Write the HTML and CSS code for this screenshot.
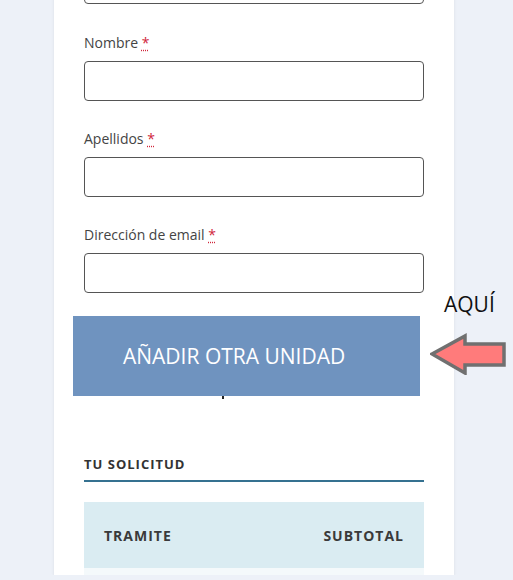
FILE: index.html
```html
<!DOCTYPE html>
<html lang="es">
<head>
    <meta charset="UTF-8">
    <meta name="viewport" content="width=device-width, initial-scale=1.0">
    <title>Solicitud</title>
    <link rel="stylesheet" href="styles.css">
</head>
<body>
    <div class="card">
        <div class="field field-top">
            <input type="text" class="input">
        </div>

        <div class="field">
            <label>Nombre <abbr class="required" title="obligatorio">*</abbr></label>
            <input type="text" class="input">
        </div>

        <div class="field">
            <label>Apellidos <abbr class="required" title="obligatorio">*</abbr></label>
            <input type="text" class="input">
        </div>

        <div class="field">
            <label>Dirección de email <abbr class="required" title="obligatorio">*</abbr></label>
            <input type="email" class="input">
        </div>

        <div class="add-unit">
            <span class="add-unit-dot"></span>
        </div>

        <h3 class="order-title">TU SOLICITUD</h3>

        <div class="order-table">
            <div class="order-head">
                <span>TRAMITE</span>
                <span>SUBTOTAL</span>
            </div>
            <div class="order-row"></div>
        </div>

        <!-- anotación sobre la captura -->
        <div class="note-box">AÑADIR OTRA UNIDAD</div>
        <div class="note-label">AQUÍ</div>
        <svg class="note-arrow" width="78" height="42" viewBox="0 0 78 42">
            <path d="M2 21 L35 3 L35 11 L74 11 L74 32 L35 32 L35 40 Z" fill="#ff7b7b" stroke="#707070" stroke-width="3.5" stroke-linejoin="miter"/>
        </svg>
    </div>
</body>
</html>
```

FILE: styles.css
```css
body {
    margin: 0;
    background-color: #edf1f8;
    font-family: 'Open Sans', 'Liberation Sans', sans-serif;
    color: #444;
    overflow: hidden;
}

.card {
    position: relative;
    width: 400px;
    height: 611px;
    margin: -36px 0 0 54px;
    padding: 0 30px;
    box-sizing: border-box;
    background: #ffffff;
    box-shadow: 0 1px 3px rgba(0, 0, 0, 0.08);
}

.field {
    margin-bottom: 28px;
}

.field-top {
    margin-bottom: 29px;
}

.field label {
    display: block;
    font-size: 14px;
    line-height: 20px;
    margin-bottom: 8px;
    color: #444;
}

.required {
    color: #d0253a;
    text-decoration: underline dotted;
    text-underline-offset: 2px;
    border: none;
}

.input {
    display: block;
    width: 100%;
    height: 40px;
    box-sizing: border-box;
    border: 1px solid #555;
    border-radius: 4px;
    background: #fff;
    margin: 0;
}

.add-unit {
    height: 139px;
    margin-top: -5px;
    position: relative;
}

.add-unit-dot {
    position: absolute;
    left: 138px;
    top: 80px;
    width: 2px;
    height: 3px;
    background: #222;
}

.order-title {
    margin: 0 0 20px;
    padding-bottom: 7px;
    font-size: 13px;
    line-height: 18px;
    font-weight: 700;
    letter-spacing: 1px;
    color: #333;
    border-bottom: 2px solid #357190;
}

.order-head {
    display: flex;
    justify-content: space-between;
    align-items: center;
    height: 66px;
    padding: 0 20px;
    background: #daecf2;
    font-size: 14px;
    font-weight: 700;
    letter-spacing: 1px;
    color: #3a3a3a;
}

.order-row {
    height: 20px;
    background: #f4f9fb;
}

.note-box {
    position: absolute;
    left: 19px;
    top: 352px;
    width: 347px;
    height: 80px;
    box-sizing: border-box;
    padding-left: 50px;
    display: flex;
    align-items: center;
    background: #6f93bf;
    color: #ffffff;
    font-size: 21px;
}

.note-label {
    position: absolute;
    left: 390px;
    top: 326px;
    font-size: 21px;
    color: #111;
}

.note-arrow {
    position: absolute;
    left: 376px;
    top: 369px;
}
```
